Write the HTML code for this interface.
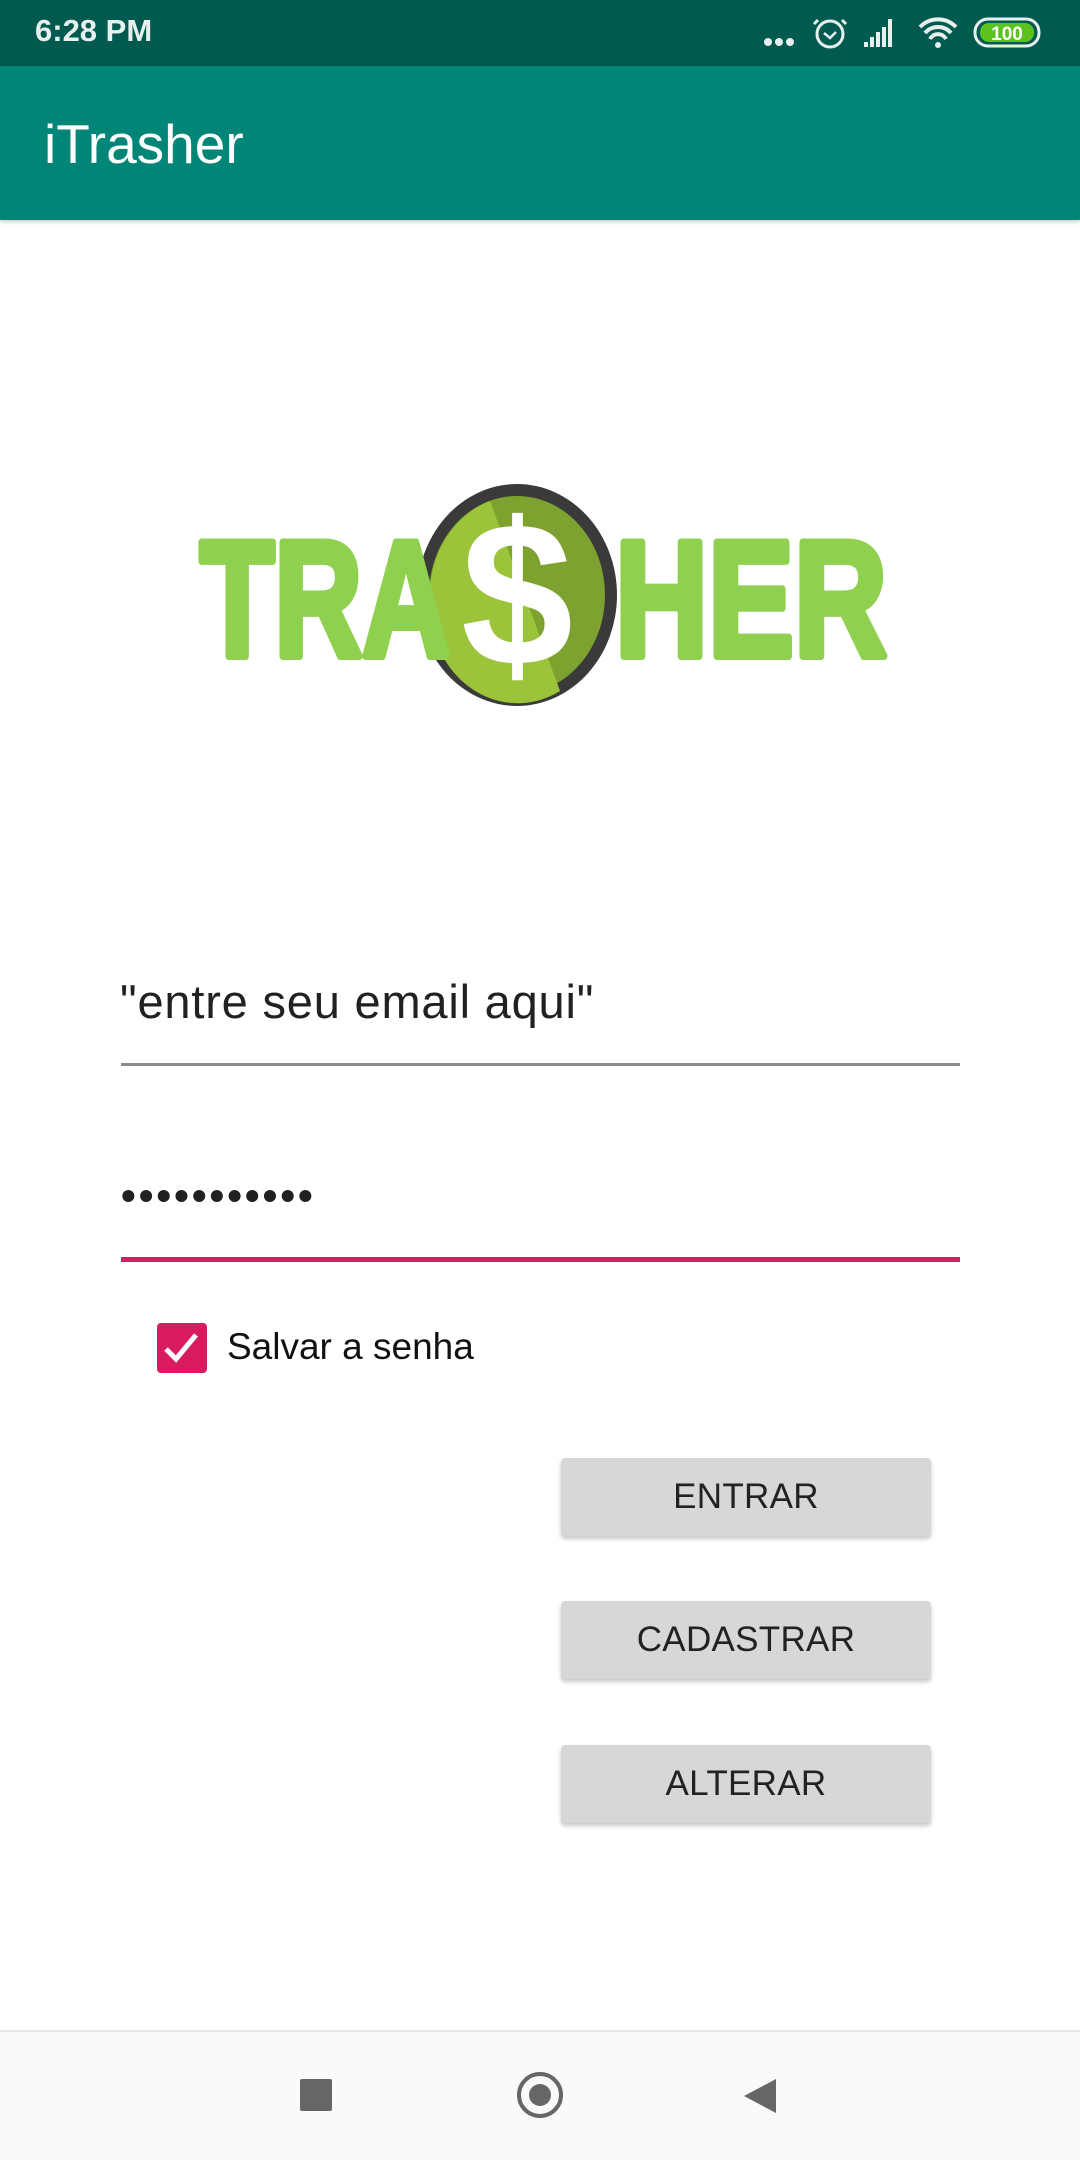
<!DOCTYPE html>
<html><head><meta charset="utf-8"><style>
*{margin:0;padding:0;box-sizing:border-box}
body{width:1080px;height:2160px;background:#fff;position:relative;font-family:"Liberation Sans",sans-serif;overflow:hidden}
.abs{position:absolute}
.btn{position:absolute;left:561px;width:370px;height:78px;background:#d6d7d7;border-radius:4px;box-shadow:0 3px 4px rgba(0,0,0,.22);font-size:35px;color:#222;text-align:center;line-height:78px;letter-spacing:0.3px}
</style></head><body>
<div class="abs" style="left:0;top:0;width:1080px;height:66px;background:#005a4f"></div>
<div class="abs" style="left:35px;top:13px;font-size:31px;font-weight:bold;color:#e8f0ee">6:28 PM</div>
<svg class="abs" style="left:760px;top:14px" width="300" height="40" viewBox="0 0 300 40">
<g fill="#e8f0ee"><circle cx="8" cy="28" r="4"/><circle cx="19" cy="28" r="4"/><circle cx="30" cy="28" r="4"/></g>
<circle cx="70" cy="20" r="13" fill="none" stroke="#e8f0ee" stroke-width="3"/>
<path d="M64 19l6 5 6-6" fill="none" stroke="#e8f0ee" stroke-width="2.5"/>
<path d="M58 6l-4 4M82 6l4 4" stroke="#e8f0ee" stroke-width="3"/>
<g fill="#e8f0ee"><rect x="104" y="28" width="4" height="5"/><rect x="110" y="23" width="4" height="10"/><rect x="116" y="18" width="4" height="15"/><rect x="122" y="13" width="4" height="20"/><rect x="128" y="5" width="4" height="28"/></g>
<path d="M160 13a25 25 0 0 1 36 0M165 19a17 17 0 0 1 26 0M170 25a9 9 0 0 1 16 0" fill="none" stroke="#e8f0ee" stroke-width="4"/>
<circle cx="178" cy="31" r="3" fill="#e8f0ee"/>
<rect x="215" y="5" width="64" height="27" rx="13" fill="none" stroke="#e8f0ee" stroke-width="3"/>
<rect x="220" y="9" width="54" height="19" rx="9" fill="#5ac31e"/>
<text x="247" y="26" font-size="19" font-weight="bold" fill="#fff" text-anchor="middle" font-family="Liberation Sans">100</text>
</svg>
<div class="abs" style="left:0;top:66px;width:1080px;height:154px;background:#008577;box-shadow:0 2px 4px rgba(0,0,0,.2)"></div>
<div class="abs" style="left:44px;top:112px;color:#fff;font-size:55px">iTrasher</div>

<svg class="abs" style="left:190px;top:470px" width="710" height="280" viewBox="0 0 710 280">
<ellipse cx="327" cy="125" rx="100" ry="111" fill="#3a3a3a"/>
<ellipse cx="327" cy="125" rx="88" ry="99" fill="#7da22f"/>
<path d="M240 125a88 99 0 0 1 60-94l70 190a88 99 0 0 1-130-96z" fill="#9cc43a"/>
<text x="327" y="195" font-size="205" font-weight="bold" fill="#fff" text-anchor="middle" font-family="Liberation Sans" textLength="112" lengthAdjust="spacingAndGlyphs">$</text>
<text x="10" y="186" font-size="165" font-weight="bold" fill="#8fd14f" stroke="#8fd14f" stroke-width="8" stroke-linejoin="round" font-family="Liberation Sans" textLength="250" lengthAdjust="spacingAndGlyphs">TRA</text>
<text x="425" y="186" font-size="165" font-weight="bold" fill="#8fd14f" stroke="#8fd14f" stroke-width="8" stroke-linejoin="round" font-family="Liberation Sans" textLength="272" lengthAdjust="spacingAndGlyphs">HER</text>
</svg>

<div class="abs" style="left:120px;top:974px;font-size:47px;color:#212121;letter-spacing:0.8px">"entre seu email aqui"</div>
<div class="abs" style="left:121px;top:1063px;width:839px;height:3px;background:#8a8a8a"></div>
<div class="abs" style="left:121px;top:1172px;font-size:42px;color:#212121;letter-spacing:3px;font-weight:bold">•••••••••••</div>
<div class="abs" style="left:121px;top:1257px;width:839px;height:5px;background:#d81b60"></div>
<div class="abs" style="left:157px;top:1323px;width:50px;height:50px;background:#d81b60;border-radius:4px"></div>
<svg class="abs" style="left:157px;top:1323px" width="50" height="50"><path d="M9 26l10 10 20-24" fill="none" stroke="#fff" stroke-width="5"/></svg>
<div class="abs" style="left:227px;top:1326px;font-size:37px;color:#111">Salvar a senha</div>

<div class="btn" style="top:1458px">ENTRAR</div>
<div class="btn" style="top:1601px">CADASTRAR</div>
<div class="btn" style="top:1745px">ALTERAR</div>

<div class="abs" style="left:0;top:2030px;width:1080px;height:130px;background:#fafafa;border-top:2px solid #e6e6e6"></div>
<div class="abs" style="left:300px;top:2079px;width:32px;height:32px;background:#666;border-radius:2px"></div>
<div class="abs" style="left:517px;top:2072px;width:46px;height:46px;border:4px solid #666;border-radius:50%"></div>
<div class="abs" style="left:529px;top:2084px;width:22px;height:22px;background:#666;border-radius:50%"></div>
<svg class="abs" style="left:742px;top:2077px" width="36" height="38"><path d="M34 2v34L2 19z" fill="#666"/></svg>
</body></html>
